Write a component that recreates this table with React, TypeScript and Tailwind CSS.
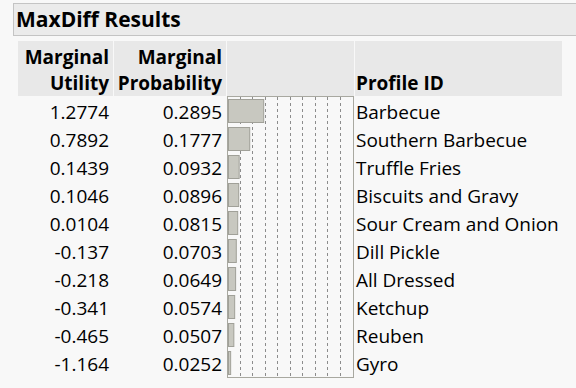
const rows = [
  { utility: "1.2774", prob: 0.2895, name: "Barbecue" },
  { utility: "0.7892", prob: 0.1777, name: "Southern Barbecue" },
  { utility: "0.1439", prob: 0.0932, name: "Truffle Fries" },
  { utility: "0.1046", prob: 0.0896, name: "Biscuits and Gravy" },
  { utility: "0.0104", prob: 0.0815, name: "Sour Cream and Onion" },
  { utility: "-0.137", prob: 0.0703, name: "Dill Pickle" },
  { utility: "-0.218", prob: 0.0649, name: "All Dressed" },
  { utility: "-0.341", prob: 0.0574, name: "Ketchup" },
  { utility: "-0.465", prob: 0.0507, name: "Reuben" },
  { utility: "-1.164", prob: 0.0252, name: "Gyro" },
]

const SCALE = 125

function BarChart() {
  const h = 282
  return (
    <svg width={127} height={h} className="block">
      <rect x={0.5} y={0.5} width={126} height={h - 1} fill="none" stroke="#a8a8a0" />
      {Array.from({ length: 9 }, (_, k) => {
        const x = Math.round(12.5 * (k + 1)) + 0.5
        return (
          <line key={k} x1={x} x2={x} y1={1} y2={h - 1} stroke="#8c8c8c" strokeDasharray="3 3" />
        )
      })}
      {rows.map((r, i) => (
        <rect
          key={r.name}
          x={1.5}
          y={3.5 + 28 * i}
          width={Math.max(r.prob * SCALE - 1, 1)}
          height={23}
          fill="#c8c8c0"
          stroke="#a0a098"
        />
      ))}
    </svg>
  )
}

export default function App() {
  return (
    <div className="h-[388px] w-[576px] overflow-hidden bg-[#f8f8f8] pt-[3px] font-['Open_Sans',sans-serif] text-black">
      <div className="ml-[13px] flex h-[33px] w-[570px] items-center border border-[#c4c4c4] bg-[#ebebeb] px-[2px]">
        <span className="text-[21px] font-bold leading-none">MaxDiff Results</span>
      </div>

      <div className="ml-[18px] mt-[5px] flex gap-px text-[19px]">
        <div className="flex w-[95px] flex-col">
          <div className="flex h-[55px] flex-col items-end justify-end bg-[#e8e8e8] pr-[4px] text-right font-bold leading-[26px]">
            <span>Marginal</span>
            <span>Utility</span>
          </div>
          <div className="mt-px">
            {rows.map((r) => (
              <div key={r.name} className="flex h-[28px] items-center justify-end pr-[4px] pt-[3px]">
                {r.utility}
              </div>
            ))}
          </div>
        </div>

        <div className="flex w-[112px] flex-col">
          <div className="flex h-[55px] flex-col items-end justify-end bg-[#e8e8e8] pr-[4px] text-right font-bold leading-[26px]">
            <span>Marginal</span>
            <span>Probability</span>
          </div>
          <div className="mt-px">
            {rows.map((r) => (
              <div key={r.name} className="flex h-[28px] items-center justify-end pr-[4px] pt-[3px]">
                {r.prob.toFixed(4)}
              </div>
            ))}
          </div>
        </div>

        <div className="flex w-[127px] flex-col">
          <div className="h-[55px] bg-[#e8e8e8]" />
          <BarChart />
        </div>

        <div className="flex w-[207px] flex-col">
          <div className="flex h-[55px] items-end bg-[#e8e8e8] pl-px font-bold leading-[26px]">
            Profile ID
          </div>
          <div className="mt-px">
            {rows.map((r) => (
              <div key={r.name} className="flex h-[28px] items-center pl-px pt-[3px]">
                {r.name}
              </div>
            ))}
          </div>
        </div>
      </div>
    </div>
  )
}
